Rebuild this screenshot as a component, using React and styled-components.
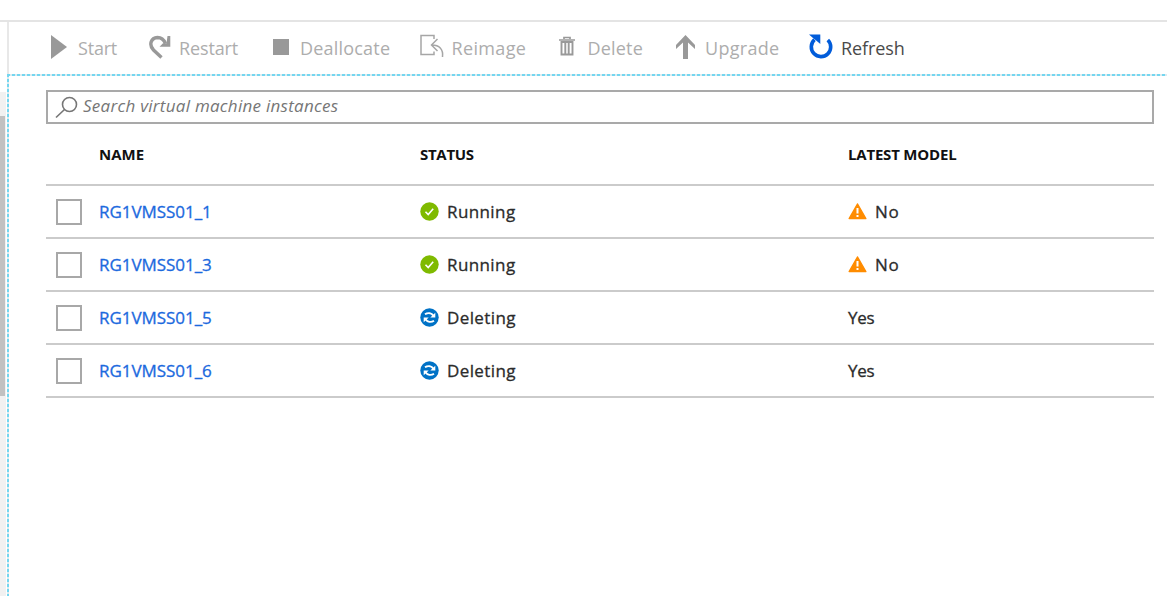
import React from "react";
import styled, { createGlobalStyle } from "styled-components";

const Global = createGlobalStyle`
  * { box-sizing: border-box; }
  body { margin: 0; background: #fff; font-family: "Open Sans", "Noto Sans", sans-serif; overflow: hidden; }
`;

const Page = styled.div`
  display: flex;
  flex-direction: column;
  width: 100%;
  height: 596px;
  padding-top: 20px;
`;

const Blade = styled.div`
  display: flex;
  flex: 1;
  min-height: 0;
  border-top: 2px solid #e4e4e4;
`;

const Gutter = styled.div`
  width: 7px;
  padding-top: 70px;
  display: flex;
  flex-direction: column;
`;

const Track = styled.div`
  flex: 1;
  width: 6px;
  padding-top: 24px;
  background: #f1f1f1;
`;

const Thumb = styled.div`
  width: 5px;
  height: 280px;
  background: #c1c1c1;
`;

const Main = styled.main`
  flex: 1;
  min-width: 0;
  display: flex;
  flex-direction: column;
`;

const Toolbar = styled.div`
  display: flex;
  height: 52px;
  padding-left: 41px;
  border-left: 2px solid #e8e8e8;
`;

const Command = styled.button`
  display: flex;
  flex: none;
  align-items: center;
  width: ${(p) => p.$width}px;
  height: 52px;
  padding: 0;
  border: 0;
  background: none;
  font: 400 18px "Open Sans", "Noto Sans", sans-serif;
  color: ${(p) => (p.$active ? "#4a4a4a" : "#adadad")};
`;

const CommandIcon = styled.svg`
  flex: none;
  width: ${(p) => p.$slot}px;
  height: 30px;
  margin-top: -2px;
`;

const Label = styled.span`
  display: block;
  white-space: nowrap;
  font-size: ${(p) => p.$size || 18}px;
  letter-spacing: ${(p) => p.$track || 0}px;
`;

const Content = styled.section`
  flex: 1;
  padding: 16px 13px 0 39px;
  background:
    repeating-linear-gradient(90deg, #74d6f0 0 3px, #dcebef 3px 5px) 0 0 / 100% 2px no-repeat,
    repeating-linear-gradient(180deg, #74d6f0 0 3px, #dcebef 3px 5px) 0 0 / 2px 100% no-repeat;
`;

const SearchBox = styled.div`
  display: flex;
  align-items: center;
  height: 34px;
  padding-left: 7px;
  border: 2px solid #a9a9a9;
  color: #767676;
  font-style: italic;
`;

const SearchIcon = styled.svg`
  width: 24px;
  height: 24px;
  margin-right: 4px;
`;

const SearchText = styled(Label)`
  margin-top: -3px;
`;

const Row = styled.div`
  display: grid;
  grid-template-columns: 53px 321px 428px 1fr;
  align-items: center;
  height: ${(p) => (p.$head ? 62 : 53)}px;
  padding-bottom: ${(p) => (p.$head ? 1 : 0)}px;
  border-bottom: 2px solid #cbcbcb;
  color: ${(p) => (p.$head ? "#111" : "#2b2b2b")};
  font-weight: ${(p) => (p.$head ? 700 : 400)};
  -webkit-text-stroke: ${(p) => (p.$head ? 0 : 0.3)}px currentColor;
`;

const Cell = styled.div`
  display: flex;
  align-items: center;
  color: ${(p) => (p.$link ? "#1b69de" : "inherit")};
`;

const Checkbox = styled.div`
  width: 26px;
  height: 26px;
  margin-left: 10px;
  border: 2px solid #a8a8a8;
`;

const StateIcon = styled.svg`
  width: 19px;
  height: 19px;
  margin-right: 8px;
`;

const commands = [
  { name: "Start", width: 99, slot: 28, track: -0.2, icon: <path d="M1 3v24l16-12z" fill="#999" /> },
  {
    name: "Restart", width: 124, slot: 30, track: -0.12,
    icon: <><path d="M12.500 25.500 4.500 18C-.5 12.500 2 6 8.500 5.500c4.500 0 6.500 2.500 8 6" fill="none" stroke="#999" strokeWidth="3.400" /><path d="M21.300 4v10.700H10.500l3.500-3.400h3.500L18.500 4z" fill="#999" /></>,
  },
  { name: "Deallocate", width: 147, slot: 27, track: 0.2, icon: <path d="M0 7h16v16H0z" fill="#999" /> },
  {
    name: "Reimage", width: 139, slot: 31.5, track: 0.35,
    icon: <path d="M14 7V3.500H1v19h13v-3M17.500 7l-6 6 6 6M12 13c7 0 11.500 4 10.500 12" fill="none" stroke="#a6a6a6" strokeWidth="1.500" />,
  },
  {
    name: "Delete", width: 117, slot: 28.5, track: 0.2,
    icon: <><path d="M0 8h16M5 7V5.500h6V7" fill="none" stroke="#999" strokeWidth="1.700" /><path d="M2.500 10v12.500h11V10zM6.300 11v11M9.700 11v11" fill="none" stroke="#999" strokeWidth="1.900" /></>,
  },
  { name: "Upgrade", width: 133, slot: 29, track: 0.3, icon: <path d="M9.500 3 19 13v4l-7-6.500V27H7V10.500L0 17v-4z" fill="#999" /> },
  {
    name: "Refresh", width: 110, slot: 32, track: -0.1, active: true,
    icon: <><path d="M18.800 8a9.700 9.700 0 1 1-13.300-.3" fill="none" stroke="#015cda" strokeWidth="3.600" /><path d="M0 2.500h11.300v9.500L7.500 8.800 4 6z" fill="#015cda" /></>,
  },
];

const rows = [
  { name: "RG1VMSS01_1", status: "Running", latest: "No" },
  { name: "RG1VMSS01_3", status: "Running", latest: "No" },
  { name: "RG1VMSS01_5", status: "Deleting", latest: "Yes" },
  { name: "RG1VMSS01_6", status: "Deleting", latest: "Yes" },
];

const Running = () => (
  <StateIcon viewBox="0 0 19 19">
    <circle cx="9.500" cy="9.500" r="9.200" fill="#7fba00" />
    <path d="m5.500 9.800 2.700 2.700 5-5.800" fill="none" stroke="#fff" strokeWidth="1.600" />
  </StateIcon>
);

const Deleting = () => (
  <StateIcon viewBox="0 0 19 19">
    <circle cx="9.500" cy="9.500" r="9.200" fill="#0072c6" />
    <path d="M5 6.300c3-2 6.500-1.500 8.500 1.500M14 12.700c-3 2-6.500 1.500-8.500-1.500" fill="none" stroke="#fff" strokeWidth="1.900" />
    <path d="M15.300 4.800v4.700h-5zM3.700 14.200V9.500h5z" fill="#fff" />
  </StateIcon>
);

const Warning = () => (
  <StateIcon viewBox="0 0 19 19">
    <path d="M9.500 2 17.800 16.500H1.200z" fill="#ff8c00" stroke="#ff8c00" strokeWidth="1.500" strokeLinejoin="round" />
    <path d="M9.500 6v5.500M9.500 13v2" stroke="#fff" strokeWidth="2" />
  </StateIcon>
);

export default function App() {
  return (
    <Page>
      <Global />
      <Blade>
        <Gutter><Track><Thumb /></Track></Gutter>
        <Main>
          <Toolbar>
            {commands.map((c) => (
              <Command key={c.name} $width={c.width} $active={c.active}>
                <CommandIcon $slot={c.slot} viewBox={`0 0 ${c.slot} 30`}>{c.icon}</CommandIcon>
                <Label $track={c.track}>{c.name}</Label>
              </Command>
            ))}
          </Toolbar>
          <Content>
            <SearchBox>
              <SearchIcon viewBox="0 0 24 24">
                <g fill="none" stroke="#767676" strokeWidth="1.600"><circle cx="14.500" cy="9.500" r="7" /><path d="M9.500 14.500 1 22.500" /></g>
              </SearchIcon>
              <SearchText $size={17} $track={0.27}>Search virtual machine instances</SearchText>
            </SearchBox>
            <Row $head>
              <Cell />
              <Cell><Label $size={15}>NAME</Label></Cell>
              <Cell><Label $size={15} $track={-0.3}>STATUS</Label></Cell>
              <Cell><Label $size={15} $track={-0.2}>LATEST MODEL</Label></Cell>
            </Row>
            {rows.map((r) => (
              <Row key={r.name}>
                <Checkbox />
                <Cell $link><Label $size={17} $track={-0.05}>{r.name}</Label></Cell>
                <Cell>{r.status === "Running" ? <Running /> : <Deleting />}<Label $size={17} $track={0.4}>{r.status}</Label></Cell>
                <Cell>{r.latest === "No" && <Warning />}<Label $size={17} $track={r.latest === "No" ? 0.6 : -0.3}>{r.latest}</Label></Cell>
              </Row>
            ))}
          </Content>
        </Main>
      </Blade>
    </Page>
  );
}
